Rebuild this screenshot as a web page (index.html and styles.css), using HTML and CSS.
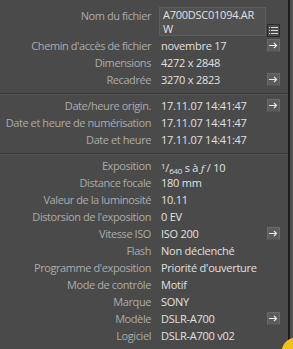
FILE: index.html
```html
<!DOCTYPE html>
<html>
<head>
  <title>Métadonnées</title>
  <link rel="stylesheet" href="styles.css">
</head>
<body>
  <div class="panel">
    <div class="section first">
      <div class="row tall">
        <div class="label">Nom du fichier</div>
        <div class="value"><div class="name-box">A700DSC01094.ARW</div></div>
        <div class="btn-cell bottom">
          <span class="list-btn">
            <svg width="9" height="9" viewBox="0 0 9 9">
              <path d="M0 1.5h1M2 1.5h7M0 4.5h1M2 4.5h7M0 7.5h1M2 7.5h7" stroke="#d8d8d8" stroke-width="1"/>
            </svg>
          </span>
        </div>
      </div>
      <div class="row">
        <div class="label">Chemin d'accès de fichier</div>
        <div class="value">novembre 17</div>
        <div class="btn-cell"><span class="go-btn"><svg width="9" height="7" viewBox="0 0 9 7"><path d="M0 3.5h7.5M5 1l2.5 2.5-2.5 2.5" stroke="#e6e6e6" fill="none" stroke-width="1.2"/></svg></span></div>
      </div>
      <div class="row">
        <div class="label">Dimensions</div>
        <div class="value">4272 x 2848</div>
        <div class="btn-cell"></div>
      </div>
      <div class="row">
        <div class="label">Recadrée</div>
        <div class="value">3270 x 2823</div>
        <div class="btn-cell"><span class="go-btn"><svg width="9" height="7" viewBox="0 0 9 7"><path d="M0 3.5h7.5M5 1l2.5 2.5-2.5 2.5" stroke="#e6e6e6" fill="none" stroke-width="1.2"/></svg></span></div>
      </div>
    </div>

    <div class="section">
      <div class="row">
        <div class="label">Date/heure origin.</div>
        <div class="value">17.11.07 14:41:47</div>
        <div class="btn-cell"><span class="go-btn"><svg width="9" height="7" viewBox="0 0 9 7"><path d="M0 3.5h7.5M5 1l2.5 2.5-2.5 2.5" stroke="#e6e6e6" fill="none" stroke-width="1.2"/></svg></span></div>
      </div>
      <div class="row">
        <div class="label">Date et heure de numérisation</div>
        <div class="value">17.11.07 14:41:47</div>
        <div class="btn-cell"></div>
      </div>
      <div class="row">
        <div class="label">Date et heure</div>
        <div class="value">17.11.07 14:41:47</div>
        <div class="btn-cell"></div>
      </div>
    </div>

    <div class="section">
      <div class="row">
        <div class="label">Exposition</div>
        <div class="value"><sup class="num">1</sup>/<sub class="den">640</sub> s à <i class="f">ƒ</i> / 10</div>
        <div class="btn-cell"></div>
      </div>
      <div class="row">
        <div class="label">Distance focale</div>
        <div class="value">180 mm</div>
        <div class="btn-cell"></div>
      </div>
      <div class="row">
        <div class="label">Valeur de la luminosité</div>
        <div class="value">10.11</div>
        <div class="btn-cell"></div>
      </div>
      <div class="row">
        <div class="label">Distorsion de l'exposition</div>
        <div class="value">0 EV</div>
        <div class="btn-cell"></div>
      </div>
      <div class="row">
        <div class="label">Vitesse ISO</div>
        <div class="value">ISO 200</div>
        <div class="btn-cell"><span class="go-btn"><svg width="9" height="7" viewBox="0 0 9 7"><path d="M0 3.5h7.5M5 1l2.5 2.5-2.5 2.5" stroke="#e6e6e6" fill="none" stroke-width="1.2"/></svg></span></div>
      </div>
      <div class="row">
        <div class="label">Flash</div>
        <div class="value">Non déclenché</div>
        <div class="btn-cell"></div>
      </div>
      <div class="row">
        <div class="label">Programme d'exposition</div>
        <div class="value">Priorité d'ouverture</div>
        <div class="btn-cell"></div>
      </div>
      <div class="row">
        <div class="label">Mode de contrôle</div>
        <div class="value">Motif</div>
        <div class="btn-cell"></div>
      </div>
      <div class="row">
        <div class="label">Marque</div>
        <div class="value">SONY</div>
        <div class="btn-cell"></div>
      </div>
      <div class="row">
        <div class="label">Modèle</div>
        <div class="value">DSLR-A700</div>
        <div class="btn-cell"><span class="go-btn"><svg width="9" height="7" viewBox="0 0 9 7"><path d="M0 3.5h7.5M5 1l2.5 2.5-2.5 2.5" stroke="#e6e6e6" fill="none" stroke-width="1.2"/></svg></span></div>
      </div>
      <div class="row">
        <div class="label">Logiciel</div>
        <div class="value">DSLR-A700 v02</div>
        <div class="btn-cell"></div>
      </div>
    </div>
  </div>
  <div class="cursor-dot"></div>
</body>
</html>
```

FILE: styles.css
```css
/* Panneau de métadonnées */
body {
  position: relative;
  margin: 0;
  height: 349px;
  overflow: hidden;
  background-color: #505050;
  font-family: "Open Sans", Arial, sans-serif;
  font-size: 11px;
  letter-spacing: -0.25px;
}

.panel {
  width: 288px;
  height: 349px;
  background-color: #4a4a4a;
  border-right: 2px solid #1c1c1c;
}

.section {
  padding: 3px 0 5px;
  border-bottom: 1px solid #3b3b3b;
  box-shadow: 0 1px 0 #545454;
}

.section.first {
  padding-top: 7px;
}

.section:last-child {
  border-bottom: none;
  box-shadow: none;
}

.row {
  display: grid;
  grid-template-columns: 151px 116px 13px;
  height: 17px;
  line-height: 17px;
}

.row.tall {
  height: 30px;
}

.label {
  text-align: right;
  color: #ababab;
  white-space: nowrap;
  letter-spacing: -0.42px;
}

.value {
  padding-left: 10px;
  color: #e0e0e0;
  white-space: nowrap;
}

.name-box {
  width: 107px;
  height: 29px;
  box-sizing: border-box;
  padding: 0 3px;
  line-height: 14px;
  background-color: #515151;
  border: 1px solid #5e5e5e;
  white-space: normal;
  word-break: break-all;
  margin-left: -2px;
}

.btn-cell {
  display: flex;
  align-items: center;
}

.btn-cell.bottom {
  align-items: flex-end;
}

.go-btn,
.list-btn {
  display: flex;
  align-items: center;
  justify-content: center;
  width: 13px;
  height: 13px;
  box-sizing: border-box;
}

.go-btn {
  background-color: #5c5c5c;
  border: 1px solid #6a6a6a;
  border-bottom-color: #535353;
}

.list-btn {
  background-color: #4c4c4c;
  border: 1px solid #2c2c2c;
}

.num {
  font-size: 8px;
  vertical-align: 3px;
}

.den {
  font-size: 8px;
  vertical-align: -2px;
}

.f {
  font-family: "DejaVu Serif", serif;
  font-size: 10px;
}

/* point jaune du curseur, coupé par le bord de la fenêtre */
.cursor-dot {
  position: absolute;
  left: 281px;
  top: 336px;
  width: 12px;
  height: 13px;
  background: radial-gradient(circle at 15px 16px, #f2c21a 14px, transparent 14.7px);
}
```
